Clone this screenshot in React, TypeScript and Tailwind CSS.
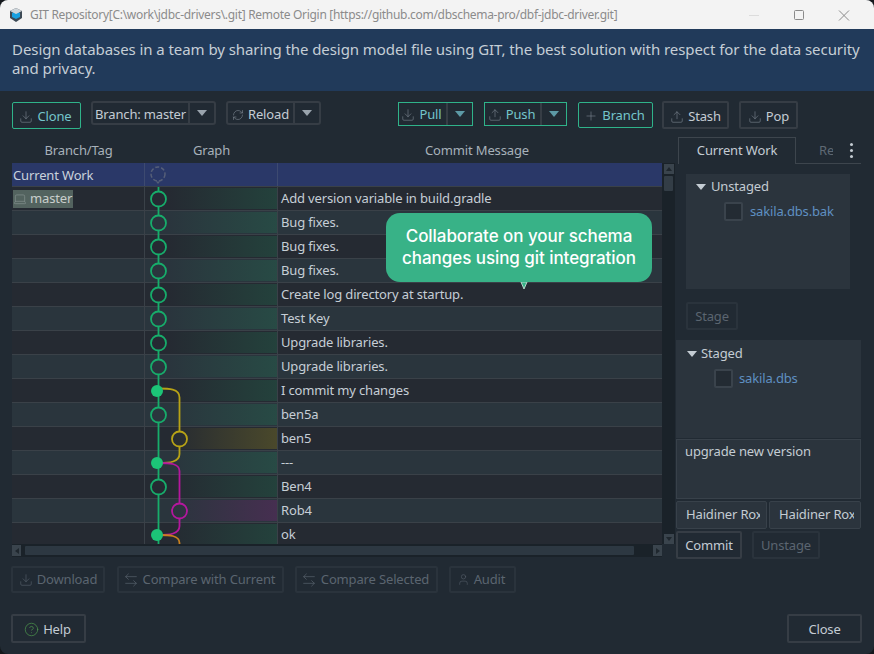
import { ArrowLeftRight, CircleHelp, Download, Laptop, Plus, RefreshCw, Upload, User } from "lucide-react"
import type { ReactNode } from "react"

const FONT = "font-['Noto_Sans',sans-serif]"

type Cell = "open" | "filled" | "line"
type Commit = {
  message: string
  node: Cell
  tint: "green" | "yellow" | "magenta"
  extra?: ReactNode
}

const GREEN = "#17ad6b"
const YELLOW = "#b8a316"
const MAGENTA = "#b5179e"
const ORANGE = "#c9801e"

const commits: Commit[] = [
  { message: "Add version variable in build.gradle", node: "open", tint: "green" },
  { message: "Bug fixes.", node: "open", tint: "green" },
  { message: "Bug fixes.", node: "open", tint: "green" },
  { message: "Bug fixes.", node: "open", tint: "green" },
  { message: "Create log directory at startup.", node: "open", tint: "green" },
  { message: "Test Key", node: "open", tint: "green" },
  { message: "Upgrade libraries.", node: "open", tint: "green" },
  { message: "Upgrade libraries.", node: "open", tint: "green" },
  {
    message: "I commit my changes",
    node: "filled",
    tint: "green",
    extra: <path d="M14 9.5c10 0 21 0 21 9V24" stroke={YELLOW} />,
  },
  {
    message: "ben5a",
    node: "open",
    tint: "green",
    extra: <path d="M35 0V24" stroke={YELLOW} />,
  },
  {
    message: "ben5",
    node: "line",
    tint: "yellow",
    extra: (
      <>
        <path d="M35 0V4.5M35 19.5V24" stroke={YELLOW} />
        <circle cx="35" cy="12" r="7.5" stroke={YELLOW} />
      </>
    ),
  },
  {
    message: "---",
    node: "filled",
    tint: "green",
    extra: (
      <>
        <path d="M35 0V3c0 8-10 9-21 9" stroke={YELLOW} />
        <path d="M14 12c10 0 21 0 21 8V24" stroke={MAGENTA} />
      </>
    ),
  },
  {
    message: "Ben4",
    node: "open",
    tint: "green",
    extra: <path d="M35 0V24" stroke={MAGENTA} />,
  },
  {
    message: "Rob4",
    node: "line",
    tint: "magenta",
    extra: (
      <>
        <path d="M35 0V4.5M35 19.5V24" stroke={MAGENTA} />
        <circle cx="35" cy="12" r="7.5" stroke={MAGENTA} />
      </>
    ),
  },
  {
    message: "ok",
    node: "filled",
    tint: "green",
    extra: (
      <>
        <path d="M35 0V3c0 8-10 9-21 9" stroke={MAGENTA} />
        <path d="M14 12c10 0 21 0 21 8V24" stroke={ORANGE} />
      </>
    ),
  },
]

function Tri({ className = "border-t-[#9aa4ad]" }: { className?: string }) {
  return (
    <span
      className={`inline-block h-0 w-0 border-x-[5px] border-t-[6px] border-x-transparent ${className}`}
    />
  )
}

function ToolButton({
  icon,
  label,
  accent,
  disabled,
  className = "",
}: {
  icon?: ReactNode
  label: string
  accent?: boolean
  disabled?: boolean
  className?: string
}) {
  const look = accent
    ? "border border-[#2fb38a] text-[#74c5cb]"
    : disabled
      ? "border-2 border-[#2a333c] text-[#5b6570]"
      : "border-2 border-[#363d45] text-[#c4ccd3]"
  return (
    <div
      className={`flex shrink-0 items-center justify-center gap-1 rounded-[2px] text-[13px] ${look} ${className}`}
    >
      {icon}
      <span>{label}</span>
    </div>
  )
}

function SplitButton({
  icon,
  label,
  accent,
  className = "",
  labelClass = "",
}: {
  icon?: ReactNode
  label: string
  accent?: boolean
  className?: string
  labelClass?: string
}) {
  const look = accent
    ? "border border-[#2fb38a] text-[#74c5cb]"
    : "border-2 border-[#363d45] text-[#c4ccd3] rounded-[3px]"
  return (
    <div className={`flex h-[24px] shrink-0 text-[13px] ${look} ${className}`}>
      <div className={`flex flex-1 items-center justify-center gap-1 ${labelClass}`}>
        {icon}
        <span>{label}</span>
      </div>
      <div className="flex w-[26px] items-center justify-center border-l-2 border-[#363d45]">
        <Tri className={accent ? "border-t-[#5d9aa6]" : "border-t-[#9aa4ad]"} />
      </div>
    </div>
  )
}

function GraphCell({ commit }: { commit: Commit }) {
  const stops = {
    green: "to-[#1ea06433]",
    yellow: "to-[#b8a31640]",
    magenta: "to-[#b5179e33]",
  }
  return (
    <div className="relative h-full w-[133px] shrink-0 border-r border-[#3a4148]">
      <div
        className={`absolute inset-y-[1px] right-0 left-[24px] bg-gradient-to-r from-transparent ${stops[commit.tint]}`}
      />
      <svg
        width="133"
        height="24"
        viewBox="0 0 133 24"
        fill="none"
        strokeWidth="1.8"
        className="absolute top-0 left-0"
      >
        <g transform="translate(-0.5 0)">
          {commit.extra}
          {commit.node === "open" && (
            <>
              <path d="M14 0V4.5M14 19.5V24" stroke={GREEN} />
              <circle cx="14" cy="12" r="7.5" stroke={GREEN} />
            </>
          )}
          {commit.node === "filled" && (
            <>
              <path d="M14 0V24" stroke={GREEN} />
              <circle cx="12.5" cy="12" r="6" fill="#1cc477" />
            </>
          )}
          {commit.node === "line" && <path d="M14 0V24" stroke={GREEN} />}
        </g>
      </svg>
    </div>
  )
}

function CommitTable() {
  return (
    <div className="relative h-[381px] w-[650px] shrink-0 overflow-hidden text-[13px]">
      <div className="flex h-[24px] items-center border-b border-[#3a4148] bg-[#2a3868] text-[#c9d2dc]">
        <div className="flex h-full w-[133px] shrink-0 items-center border-r border-[#3d4a70] pt-[2px] pl-[1px]">
          Current Work
        </div>
        <div className="flex h-full w-[133px] shrink-0 items-center border-r border-[#3d4a70] pl-[5px]">
          <svg width="16" height="18" viewBox="0 0 16 18" fill="none">
            <circle cx="8" cy="8" r="7" stroke="#565f78" strokeWidth="1.5" strokeDasharray="4 2" />
            <path d="M6 15.5h4l-2 2.5z" fill="#565f78" />
          </svg>
        </div>
      </div>
      {commits.map((c, i) => (
        <div
          key={i}
          className={`flex h-[24px] border-b border-[#3a4148] text-[#c6ced6] ${i % 2 === 0 ? "bg-[#252a32]" : "bg-[#2a353d]"}`}
        >
          <div className="flex h-full w-[133px] shrink-0 items-center border-r border-[#3a4148] pl-[1px]">
            {i === 0 && (
              <div className="flex h-[18px] items-center gap-[3px] bg-[#53635f] pr-[1px] text-[#c9cfcc]">
                <Laptop size={14} strokeWidth={1} className="text-[#8d9a98]" />
                <span>master</span>
              </div>
            )}
          </div>
          <GraphCell commit={c} />
          <div className="flex items-center pl-[3px]">{c.message}</div>
        </div>
      ))}
    </div>
  )
}

function RightPanel() {
  return (
    <div className="flex w-[186px] shrink-0 flex-col text-[13px]">
      <div className="relative ml-[3px] flex h-[27px] shrink-0 border-b border-[#3d454d]">
        <div className="-mb-px flex w-[118px] items-center justify-center border-x border-t border-[#3d454d] bg-[#212a33] text-[#c4ccd3]">
          Current Work
        </div>
        <div className="ml-[23px] w-[14px] overflow-hidden pt-[4px] text-[#5f6973]">Re</div>
        <div className="absolute top-[6px] right-[8px] flex flex-col gap-[3px]">
          <span className="size-[3px] rounded-full bg-[#c4ccd3]" />
          <span className="size-[3px] rounded-full bg-[#c4ccd3]" />
          <span className="size-[3px] rounded-full bg-[#c4ccd3]" />
        </div>
      </div>
      <div className="mt-[10px] ml-[11px] h-[115px] w-[164px] shrink-0 bg-[#2b343d] pt-[3px]">
        <div className="flex items-center gap-[5px] pl-[10px] text-[#c4ccd3]">
          <Tri className="border-t-[#c4ccd3]" />
          <span>Unstaged</span>
        </div>
        <div className="mt-[5px] flex items-center gap-[7px] pl-[38px] text-[#5f90c2]">
          <span className="size-[19px] rounded-[2px] border-2 border-[#3a434c] bg-[#232b33]" />
          <span>sakila.dbs.bak</span>
        </div>
      </div>
      <ToolButton label="Stage" disabled className="mt-[13px] ml-[11px] h-[28px] w-[52px] pt-[2px]" />
      <div className="mt-[10px] ml-[1px] h-[98px] shrink-0 bg-[#2b343d] pt-[4px]">
        <div className="flex items-center gap-[4px] pl-[11px] text-[#c4ccd3]">
          <Tri className="border-t-[#c4ccd3]" />
          <span>Staged</span>
        </div>
        <div className="mt-[5px] flex items-center gap-[6px] pl-[38px] text-[#5f90c2]">
          <span className="size-[19px] rounded-[2px] border-2 border-[#3a434c] bg-[#232b33]" />
          <span>sakila.dbs</span>
        </div>
      </div>
      <div className="mt-[1px] ml-[1px] h-[60px] shrink-0 border border-[#38414a] bg-[#2b343d] px-[8px] pt-[2px] text-[#c4ccd3]">
        upgrade new version
      </div>
      <div className="mt-[2px] ml-[1px] flex h-[28px] shrink-0 gap-[2px] text-[#c4ccd3]">
        <div className="w-[91px] overflow-hidden rounded-[2px] border border-[#38414a] bg-[#2b343d] pt-[3px] pl-[9px] whitespace-nowrap">
          <div className="w-[74px] overflow-hidden">Haidiner Roxana</div>
        </div>
        <div className="flex-1 overflow-hidden rounded-[2px] border border-[#38414a] bg-[#2b343d] pt-[3px] pl-[9px] whitespace-nowrap">
          <div className="w-[75px] overflow-hidden">Haidiner Roxana</div>
        </div>
      </div>
      <div className="mt-[2px] ml-[1px] flex gap-[10px]">
        <ToolButton label="Commit" className="h-[28px] w-[66px] pt-[2px]" />
        <ToolButton label="Unstage" disabled className="h-[28px] w-[68px] pt-[2px]" />
      </div>
    </div>
  )
}

export default function App() {
  const grey = "text-[#7f8a94]"
  const dim = "text-[#4d5862]"
  return (
    <div className={`h-[654px] w-[874px] overflow-hidden bg-[#14181c] tracking-[-0.15px] ${FONT}`}>
      <div className="flex h-full flex-col overflow-hidden rounded-lg bg-[#212a33]">
        {/* title bar */}
        <div className="flex h-[29px] shrink-0 items-center bg-[#f3f3f3] pl-[8px] text-[12px] tracking-[-0.3px] text-[#8b8b8b]">
          <svg width="16" height="16" viewBox="0 0 16 16" className="mr-[6px]">
            <path d="M8 1l6 3v7l-6 4-6-4V4z" fill="#3d4a55" />
            <path d="M8 4l4 2v4l-4 2-4-2V6z" fill="#18a0e0" />
            <path d="M8 1l6 3-6 3-6-3z" fill="#cfd6da" />
          </svg>
          <span>
            GIT Repository[C:\work\jdbc-drivers\.git] Remote Origin [https://github.com/dbschema-pro/dbf-jdbc-driver.git]
          </span>
          <svg width="110" height="14" viewBox="0 0 110 14" fill="none" stroke="#8a8a8a" className="mr-[15px] ml-auto">
            <path d="M0 7.5h10" stroke="#dcdcdc" />
            <rect x="45.5" y="2.5" width="9" height="9" rx="1" />
            <path d="M90 2.5l10 10M100 2.5l-10 10" />
          </svg>
        </div>

        {/* description */}
        <div className="h-[62px] shrink-0 bg-[#213a5a] pt-[11px] pl-[12px] text-[15px] leading-[19px] tracking-[-0.07px] text-[#c5ced6]">
          Design databases in a team by sharing the design model file using GIT, the best solution with respect for the data security and privacy.
        </div>

        {/* toolbar */}
        <div className="flex h-[46px] shrink-0 items-start pt-[11px] pl-[12px]">
          <ToolButton accent label="Clone" icon={<Download size={14} strokeWidth={1} className={grey} />} className="h-[27px] w-[69px] pt-[2px] pr-[2px]" />
          <SplitButton label="Branch: master" labelClass="pt-[3px]" className="-mt-px ml-[10px] w-[125px]" />
          <SplitButton label="Reload" labelClass="pt-[3px]" icon={<RefreshCw size={12} strokeWidth={1.2} className={grey} />} className="-mt-px ml-[10px] w-[95px]" />
          <SplitButton accent label="Pull" labelClass="pt-[2px] pr-[2px]" icon={<Download size={14} strokeWidth={1} className={grey} />} className="ml-[77px] w-[75px]" />
          <SplitButton accent label="Push" labelClass="pt-[2px] pr-[2px]" icon={<Upload size={14} strokeWidth={1} className={grey} />} className="ml-[11px] w-[83px]" />
          <ToolButton accent label="Branch" icon={<Plus size={14} strokeWidth={1} className={grey} />} className="ml-[11px] h-[26px] w-[75px] pt-[2px] pr-[2px]" />
          <ToolButton label="Stash" icon={<Upload size={14} strokeWidth={1} className={grey} />} className="-mt-px ml-[9px] h-[28px] w-[67px] pt-[3px]" />
          <ToolButton label="Pop" icon={<Download size={14} strokeWidth={1} className={grey} />} className="-mt-px ml-[10px] h-[28px] w-[59px] pt-[3px]" />
        </div>

        {/* table and side panel */}
        <div className="flex h-[423px] shrink-0 pl-[12px]">
          <div className="flex w-[663px] shrink-0 flex-col">
            <div className="flex h-[26px] w-[650px] shrink-0 items-end pb-[3px] text-center text-[13px] text-[#a7b1ba]">
              <div className="w-[133px]">Branch/Tag</div>
              <div className="w-[133px]">Graph</div>
              <div className="flex-1 pl-[14px]">Commit Message</div>
            </div>
            <div className="flex">
              <CommitTable />
              <div className="flex w-[13px] flex-col items-center bg-[#1a2229] pt-[1px]">
                <div className="flex h-[10px] w-[10px] items-center justify-center bg-[#3a444d]">
                  <span className="h-0 w-0 border-x-[3px] border-b-[4px] border-x-transparent border-b-[#1f272e]" />
                </div>
                <div className="mt-[2px] h-[15px] w-[9px] rounded-[1px] bg-[#333d46]" />
                <div className="mt-auto flex h-[10px] w-[10px] items-center justify-center bg-[#3a444d]">
                  <span className="h-0 w-0 border-x-[3px] border-t-[4px] border-x-transparent border-t-[#1f272e]" />
                </div>
              </div>
            </div>
            <div className="flex h-[13px] w-[650px] shrink-0 items-center bg-[#1a2229]">
              <div className="flex h-[11px] w-[9px] items-center justify-center bg-[#3a444d]">
                <span className="h-0 w-0 border-y-[3px] border-r-[4px] border-y-transparent border-r-[#1f272e]" />
              </div>
              <div className="ml-[4px] h-[9px] w-[609px] rounded-[1px] bg-[#2d3842]" />
              <div className="ml-auto flex h-[11px] w-[9px] items-center justify-center bg-[#3a444d]">
                <span className="h-0 w-0 border-y-[3px] border-l-[4px] border-y-transparent border-l-[#1f272e]" />
              </div>
            </div>
          </div>
          <RightPanel />
        </div>

        {/* commit actions */}
        <div className={`mt-[6px] flex h-[27px] shrink-0 pl-[11px] ${dim}`}>
          <ToolButton disabled label="Download" icon={<Download size={14} strokeWidth={1} />} className="w-[94px]" />
          <ToolButton disabled label="Compare with Current" icon={<ArrowLeftRight size={16} strokeWidth={1} />} className="ml-[12px] w-[167px] pr-[3px]" />
          <ToolButton disabled label="Compare Selected" icon={<ArrowLeftRight size={16} strokeWidth={1} />} className="ml-[11px] w-[143px] pr-[3px]" />
          <ToolButton disabled label="Audit" icon={<User size={13} strokeWidth={1} />} className="ml-[11px] w-[67px] pr-[3px]" />
        </div>

        {/* footer */}
        <div className="mt-[21px] flex h-[29px] shrink-0 justify-between pr-[12px] pl-[11px]">
          <ToolButton label="Help" icon={<CircleHelp size={15} strokeWidth={1.1} className="text-[#4f9a4f]" />} className="w-[75px] pt-[2px] pr-[2px]" />
          <ToolButton label="Close" className="w-[75px] pt-[2px]" />
        </div>
      </div>

      {/* callout */}
      <div className="absolute top-[213px] left-[386px] flex h-[69px] w-[266px] flex-col items-center justify-center rounded-[14px] bg-[#38b287] pb-[1px] font-['Inter',sans-serif] text-[17px] leading-[22px] font-medium tracking-[-0.06px] text-white">
        <span>Collaborate on your schema</span>
        <span>changes using git integration</span>
        <svg width="10" height="9" viewBox="0 0 10 9" className="absolute top-[69px] left-[134px]" fill="none">
          <path d="M1 0l3 7 3-7z" fill="#38b287" stroke="#b5d8cc" />
        </svg>
      </div>
    </div>
  )
}
